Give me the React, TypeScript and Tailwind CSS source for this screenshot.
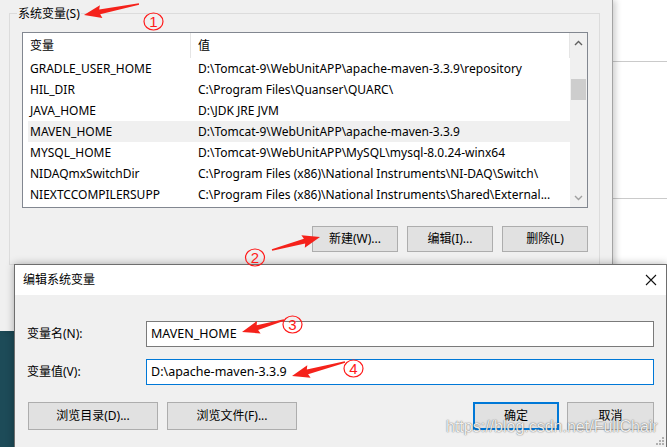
import React from 'react';

const rows = [
  { name: 'GRADLE_USER_HOME', value: 'D:\\Tomcat-9\\WebUnitAPP\\apache-maven-3.3.9\\repository' },
  { name: 'HIL_DIR', value: 'C:\\Program Files\\Quanser\\QUARC\\' },
  { name: 'JAVA_HOME', value: 'D:\\JDK JRE JVM' },
  { name: 'MAVEN_HOME', value: 'D:\\Tomcat-9\\WebUnitAPP\\apache-maven-3.3.9', active: true },
  { name: 'MYSQL_HOME', value: 'D:\\Tomcat-9\\WebUnitAPP\\MySQL\\mysql-8.0.24-winx64' },
  { name: 'NIDAQmxSwitchDir', value: 'C:\\Program Files (x86)\\National Instruments\\NI-DAQ\\Switch\\' },
  { name: 'NIEXTCCOMPILERSUPP', value: 'C:\\Program Files (x86)\\National Instruments\\Shared\\External...' },
];

// red snipping-tool style arrow, from tail to tip
function arrowPoints(tx: number, ty: number, hx: number, hy: number) {
  const len = Math.hypot(hx - tx, hy - ty);
  const dx = (hx - tx) / len;
  const dy = (hy - ty) / len;
  const nx = -dy;
  const ny = dx;
  const headLen = 16;
  const bx = hx - dx * headLen;
  const by = hy - dy * headLen;
  const pts = [
    [tx + nx * 0.7, ty + ny * 0.7],
    [bx + nx * 2.5, by + ny * 2.5],
    [bx - dx * 1.5 + nx * 6.5, by - dy * 1.5 + ny * 6.5],
    [hx, hy],
    [bx - dx * 1.5 - nx * 6.5, by - dy * 1.5 - ny * 6.5],
    [bx - nx * 2.5, by - ny * 2.5],
    [tx - nx * 0.7, ty - ny * 0.7],
  ];
  return pts.map((p) => `${p[0].toFixed(1)},${p[1].toFixed(1)}`).join(' ');
}

const marks = [
  { n: '1', cx: 153.5, cy: 21.5, arrow: [139, 4, 84, 15] },
  { n: '2', cx: 255, cy: 257.5, arrow: [272, 250, 320, 237] },
  { n: '3', cx: 292.5, cy: 324.5, arrow: [284, 320, 242, 332] },
  { n: '4', cx: 353.5, cy: 368.5, arrow: [345, 362, 292, 376] },
];

const Btn = ({ label, w, primary }: { label: string; w: string; primary?: boolean }) => (
  <div
    className={`${w} flex items-center justify-center bg-[#e1e1e1] ${
      primary ? 'border-2 border-[#0078d7]' : 'border border-[#adadad]'
    }`}
  >
    {label}
  </div>
);

export default function App() {
  return (
    <div className="relative w-[667px] h-[447px] overflow-hidden bg-[#1d4b58] text-[12px] text-black font-['Noto_Sans','Noto_Sans_CJK_SC',sans-serif]">
      {/* windows behind the dialog */}
      <div className="flex h-[331px]">
        <div className="relative z-10 w-[613px] h-full bg-[#f0f0f0] border-r border-[#a3a3a3] shadow-[3px_0_6px_rgba(0,0,0,0.18)] pt-[13px] pl-[9px] pr-[12px]">
          <div className="relative border border-[#dcdcdc] pt-[18px] pl-[12px] pr-[11px] pb-[12px]">
            <div className="absolute -top-[8px] left-[7px] px-[1px] bg-[#f0f0f0] leading-[16px]">系统变量(S)</div>

            <div className="w-[566px] h-[176px] border border-[#828790] bg-white flex">
              <div className="flex-1 flex flex-col">
                <div className="h-[25px] flex items-center">
                  <div className="w-[168px] h-full flex items-center pl-[7px] border-r border-[#e5e5e5]">变量</div>
                  <div className="flex-1 h-full flex items-center pl-[7px] border-r border-[#e5e5e5]">值</div>
                </div>
                <div className="pl-[5px]">
                  {rows.map((r) => (
                    <div key={r.name} className={`h-[21px] flex items-center whitespace-nowrap ${r.active ? 'bg-[#f0f0f0]' : ''}`}>
                      <div className="w-[163px] pl-[2px]">{r.name}</div>
                      <div className="flex-1 pl-[7px] overflow-hidden">{r.value}</div>
                    </div>
                  ))}
                </div>
              </div>
              <div className="w-[17px] bg-[#f0f0f0] flex flex-col items-center">
                <div className="h-[20px] flex items-center justify-center">
                  <svg width="9" height="6" viewBox="0 0 9 6">
                    <polyline points="1,5 4.5,1.5 8,5" fill="none" stroke="#606060" strokeWidth="1.4" />
                  </svg>
                </div>
                <div className="mt-[26px] w-[15px] h-[21px] bg-[#cdcdcd]" />
                <div className="flex-1" />
                <div className="h-[19px] flex items-center justify-center">
                  <svg width="9" height="6" viewBox="0 0 9 6">
                    <polyline points="1,1 4.5,4.5 8,1" fill="none" stroke="#a0a0a0" strokeWidth="1.4" />
                  </svg>
                </div>
              </div>
            </div>

            <div className="mt-[18px] w-[566px] flex justify-end gap-[9px] h-[26px]">
              <Btn label="新建(W)..." w="w-[86px]" />
              <Btn label="编辑(I)..." w="w-[86px]" />
              <Btn label="删除(L)" w="w-[86px]" />
            </div>
          </div>
        </div>
        <div className="flex-1 bg-white">
          <div className="h-[62px] border-b border-[#cacaca]" />
          <div className="h-[137px] border-b border-[#cacaca]" />
        </div>
      </div>

      {/* edit dialog */}
      <div className="absolute z-20 left-[14px] top-[264px] w-[653px] h-[190px] border border-[#6e6e6e] bg-[#f0f0f0] shadow-[0_0_8px_rgba(0,0,0,0.3)]">
        <div className="h-[30px] bg-white flex items-center justify-between pl-[8px] pr-[9px]">
          <span>编辑系统变量</span>
          <svg width="12" height="12" viewBox="0 0 12 12">
            <path d="M1 1 L11 11 M11 1 L1 11" stroke="#111" strokeWidth="1.1" />
          </svg>
        </div>
        <div className="px-[12px] pt-[26px]">
          <div className="flex items-center h-[26px]">
            <div className="w-[119px]">变量名(N):</div>
            <div className="flex-1 h-full border border-[#7a7a7a] bg-white flex items-center pl-[4px] text-[12.5px]">MAVEN_HOME</div>
          </div>
          <div className="flex items-center h-[26px] mt-[12px]">
            <div className="w-[119px]">变量值(V):</div>
            <div className="flex-1 h-full border border-[#0078d7] bg-white flex items-center pl-[4px] text-[12.5px]">D:\apache-maven-3.3.9</div>
          </div>
          <div className="flex h-[28px] mt-[17px] gap-[9px]">
            <div className="ml-[1px] flex gap-[9px]">
              <Btn label="浏览目录(D)..." w="w-[130px]" />
              <Btn label="浏览文件(F)..." w="w-[130px]" />
            </div>
            <div className="flex-1" />
            <div className="flex gap-[8px]">
              <Btn label="确定" w="w-[86px]" primary />
              <Btn label="取消" w="w-[87px]" />
            </div>
          </div>
        </div>
        <svg className="absolute right-[2px] top-[172px]" width="8" height="8" viewBox="0 0 8 8">
          <rect x="6" y="0" width="2" height="2" fill="#b0b0b0" />
          <rect x="3" y="3" width="2" height="2" fill="#b0b0b0" />
          <rect x="6" y="3" width="2" height="2" fill="#b0b0b0" />
          <rect x="0" y="6" width="2" height="2" fill="#b0b0b0" />
          <rect x="3" y="6" width="2" height="2" fill="#b0b0b0" />
          <rect x="6" y="6" width="2" height="2" fill="#b0b0b0" />
        </svg>
      </div>

      {/* watermark */}
      <div className="absolute z-30 left-[446px] top-[417px] leading-[20px] text-[16px] font-['Liberation_Sans',sans-serif] text-white/90 [text-shadow:0_0_1px_rgba(0,0,0,0.6),0_0_2px_rgba(0,0,0,0.25)]">
        https://blog.csdn.net/FullChair
      </div>

      {/* red annotations */}
      <svg className="absolute z-30 left-0 top-0 pointer-events-none" width="667" height="447" viewBox="0 0 667 447">
        {marks.map((m) => (
          <g key={m.n}>
            <polygon points={arrowPoints(m.arrow[0], m.arrow[1], m.arrow[2], m.arrow[3])} fill="#f5221b" />
            <ellipse cx={m.cx} cy={m.cy} rx="9.5" ry="8.5" fill="none" stroke="#ff1a1a" strokeWidth="1.2" />
            <text x={m.cx} y={m.cy + 5.5} textAnchor="middle" fontSize="15" fill="#ff1a1a" fontFamily="Liberation Sans, sans-serif">
              {m.n}
            </text>
          </g>
        ))}
      </svg>
    </div>
  );
}
